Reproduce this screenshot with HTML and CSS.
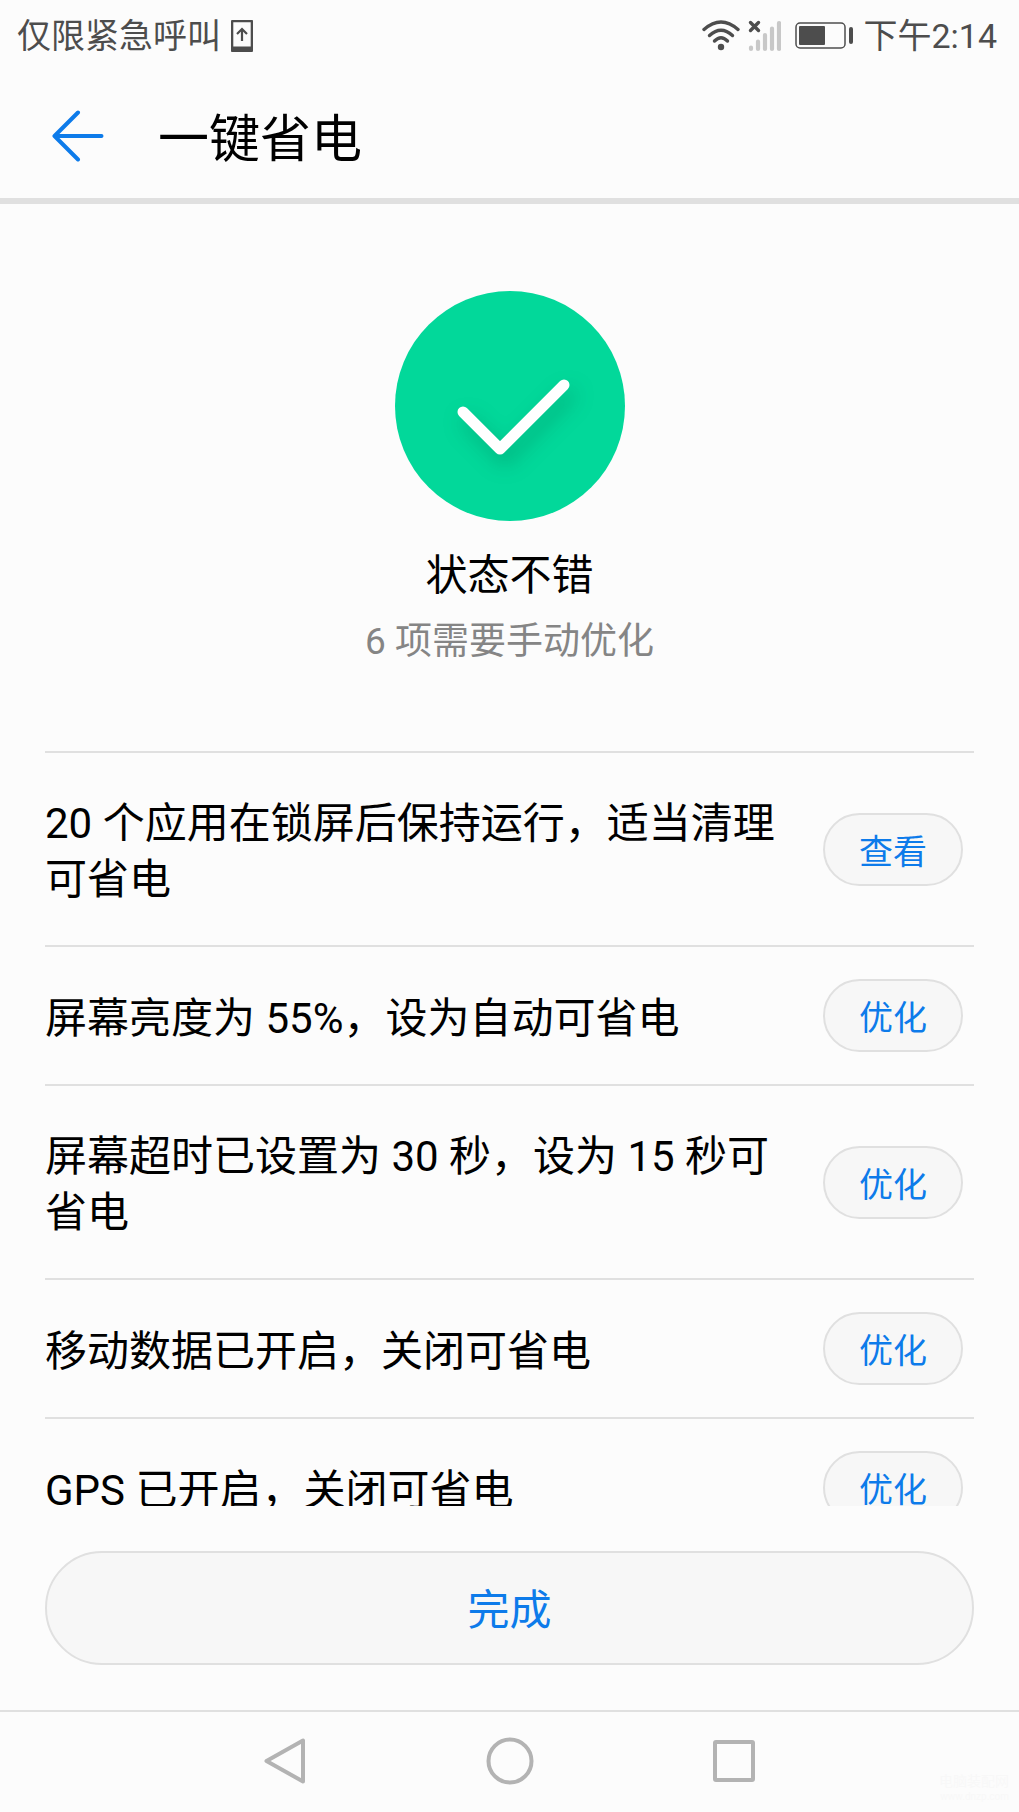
FILE: index.html
```html
<!DOCTYPE html>
<html lang="zh-CN">
<head>
  <meta charset="UTF-8" />
  <meta name="viewport" content="width=device-width, initial-scale=1" />
  <title>一键省电</title>
  <link rel="stylesheet" href="styles.css">
</head>
<body>

  <!-- Status bar -->
  <div class="status-bar">
    <div class="status-left">
      <span>仅限紧急呼叫</span>
      <svg class="icon-update" width="22" height="32" viewBox="0 0 22 32" fill="none" stroke="#4d4d4d">
        <rect x="1" y="1" width="20" height="30" rx="1" stroke-width="2.600" />
        <path d="M1 29h20" stroke-width="5" />
        <path d="M11 21V9M6 14l5-5 5 5" stroke-width="2.200" />
      </svg>
    </div>
    <div class="status-right">
      <svg width="38" height="32" viewBox="0 0 38 32" fill="none" stroke="#4d4d4d" stroke-width="3.400" stroke-linecap="round">
        <path d="M2 9.500Q19-5.500 36 9.500" />
        <path d="M7.500 15.500Q19 5 30.500 15.500" />
        <path d="M12.500 21Q19 14.500 25.500 21" />
        <circle cx="19" cy="27" r="3.200" fill="#4d4d4d" stroke="none" />
      </svg>
      <svg class="icon-signal" width="33" height="32" viewBox="0 0 33 32" fill="none" stroke="#c8c8c8" stroke-width="4.200" stroke-linecap="round">
        <path d="M3 27.500v1.500M10 21.500v7.500M17 15v14M24 8.500v20.500M31 3v26" />
        <path d="M2.500 2.500l8 8M10.500 2.500l-8 8" stroke="#4d4d4d" stroke-width="3.400" />
      </svg>
      <svg class="icon-battery" width="58" height="28" viewBox="0 0 58 28" fill="#4d4d4d">
        <rect x="1" y="1" width="49" height="25" rx="4" fill="none" stroke="#4d4d4d" stroke-width="1.500" />
        <rect x="4" y="4" width="26" height="19" rx="1" />
        <rect x="54" y="5" width="4" height="17" rx="2" />
      </svg>
      <span>下午2:14</span>
    </div>
  </div>

  <!-- Title bar -->
  <header>
    <button class="back" type="button" aria-label="返回">
      <svg width="52" height="52" viewBox="0 0 52 52" fill="none" stroke="#0d7bea" stroke-width="4" stroke-linecap="round" stroke-linejoin="round">
        <path d="M49.500 26H3M26 2.500L2.500 26 26 49.500" />
      </svg>
    </button>
    <h1>一键省电</h1>
  </header>

  <main>
    <section class="summary">
      <svg class="badge" width="230" height="230" viewBox="0 0 230 230" fill="none">
        <circle cx="115" cy="115" r="115" fill="#02d89a" />
        <path class="tick" d="M68 121L105 158 169 94" stroke="#fff" stroke-width="11" stroke-linecap="round" stroke-linejoin="round" />
      </svg>
      <h2>状态不错</h2>
      <p>6 项需要手动优化</p>
    </section>

    <ul class="items">
      <li>
        <span>20 个应用在锁屏后保持运行，适当清理可省电</span>
        <button type="button">查看</button>
      </li>
      <li>
        <span>屏幕亮度为 55%，设为自动可省电</span>
        <button type="button">优化</button>
      </li>
      <li>
        <span>屏幕超时已设置为 30 秒，设为 15 秒可省电</span>
        <button type="button">优化</button>
      </li>
      <li>
        <span>移动数据已开启，关闭可省电</span>
        <button type="button">优化</button>
      </li>
      <li>
        <span>GPS 已开启，关闭可省电</span>
        <button type="button">优化</button>
      </li>
    </ul>
  </main>

  <div class="actions">
    <button class="done" type="button">完成</button>
  </div>

  <!-- System navigation -->
  <nav>
    <button type="button" aria-label="返回">
      <svg width="48" height="48" viewBox="0 0 48 48">
        <path d="M42 3.500v41L5.500 24z" />
      </svg>
    </button>
    <button type="button" aria-label="主屏幕">
      <svg width="48" height="48" viewBox="0 0 48 48">
        <circle cx="24" cy="24" r="21.500" />
      </svg>
    </button>
    <button type="button" aria-label="最近任务">
      <svg width="48" height="48" viewBox="0 0 48 48">
        <rect x="5" y="5" width="38" height="38" rx="1" />
      </svg>
    </button>
  </nav>

  <div class="watermark">电脑装配网<small>www.dnzp.com</small></div>

</body>
</html>
```

FILE: styles.css
```css
:root {
  --bg: #fcfcfc;
  --text: #000;
  --muted: #858585;
  --status: #4d4d4d;
  --blue: #0d7bea;
  --line: #e0e0e0;
  --button: #f7f7f7;
  --side: 45px;
}

* {
  margin: 0;
  padding: 0;
  box-sizing: border-box;
}

body {
  height: 100vh;
  display: flex;
  flex-direction: column;
  font-family: Roboto, "Noto Sans CJK SC", sans-serif;
  font-size: 42px;
  line-height: 56px;
  background: var(--bg);
  color: var(--text);
}

svg {
  display: block;
}

button {
  font-family: inherit;
  color: var(--blue);
  background: none;
  border: none;
  cursor: pointer;
}

/* Status bar */
.status-bar {
  display: flex;
  justify-content: space-between;
  padding: 2px 22px 0 17px;
  font-size: 34px;
  line-height: 68px;
  color: var(--status);
}

.status-left,
.status-right {
  display: flex;
  align-items: center;
}

.icon-update {
  margin-left: 10px;
}

.icon-signal {
  margin-left: 8px;
}

.icon-battery {
  margin: 0 10px 0 14px;
}

/* Title bar */
header {
  display: flex;
  align-items: center;
  gap: 54px;
  height: 134px;
  padding: 4px 52px 0;
  border-bottom: 6px solid var(--line);
}

h1 {
  padding-top: 8px;
  font-size: 51px;
  font-weight: 400;
}

/* Scrolling content */
main {
  flex: 1;
  min-height: 0;
  overflow-y: auto;
  scrollbar-width: none;
  padding: 0 var(--side);
}

.summary {
  padding: 87px 0 81px;
  text-align: center;
}

.badge {
  margin: 0 auto 27px;
}

.tick {
  filter: drop-shadow(5px 10px 10px rgba(0, 90, 60, 0.3));
}

h2 {
  font-size: 42px;
  font-weight: 400;
}

.summary p {
  margin-top: 10px;
  font-size: 37px;
  color: var(--muted);
}

.items {
  list-style: none;
}

.items li {
  display: flex;
  align-items: center;
  justify-content: space-between;
  gap: 20px;
  padding: 32px 11px 32px 0;
  border-top: 2px solid var(--line);
}

.items span {
  padding: 11px 0 5px;
}

.items button {
  flex: none;
  width: 140px;
  height: 73px;
  font-size: 34px;
  background: var(--button);
  border: 2px solid var(--line);
  border-radius: 37px;
}

/* Bottom action */
.actions {
  padding: 45px var(--side);
}

.done {
  width: 100%;
  height: 114px;
  padding-bottom: 4px;
  font-size: 42px;
  background: var(--button);
  border: 2px solid var(--line);
  border-radius: 57px;
}

/* System navigation */
nav {
  display: flex;
  justify-content: center;
  padding: 0 17%;
  border-top: 2px solid var(--line);
}

nav button {
  flex: 1;
  display: flex;
  justify-content: center;
  padding: 25px 0 27px;
}

nav svg {
  fill: none;
  stroke: #b3b3b3;
  stroke-width: 4;
  stroke-linejoin: round;
}

.watermark {
  position: absolute;
  right: 10px;
  bottom: 8px;
  font-size: 14px;
  line-height: 15px;
  text-align: right;
  color: #f8f8f8;
  pointer-events: none;
}

.watermark small {
  display: block;
  font-size: 10px;
}
```
